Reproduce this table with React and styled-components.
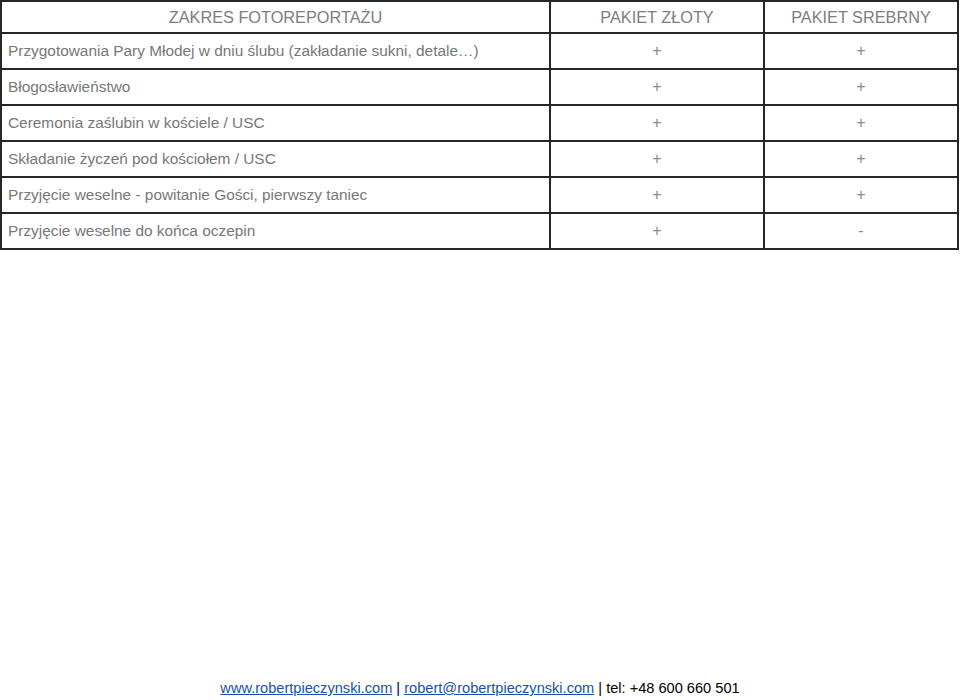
import React from "react";
import styled, { createGlobalStyle } from "styled-components";

const rows = [
  ["Przygotowania Pary Młodej w dniu ślubu (zakładanie sukni, detale…)", "+", "+"],
  ["Błogosławieństwo", "+", "+"],
  ["Ceremonia zaślubin w kościele / USC", "+", "+"],
  ["Składanie życzeń pod kościołem / USC", "+", "+"],
  ["Przyjęcie weselne - powitanie Gości, pierwszy taniec", "+", "+"],
  ["Przyjęcie weselne do końca oczepin", "+", "-"],
];

const App = () => {
  return (
    <>
      <GlobalStyle />
      <Page>
        <Table>
          <colgroup>
            <col style={{ width: 549 }} />
            <col style={{ width: 214 }} />
            <col style={{ width: 194 }} />
          </colgroup>
          <thead>
            <tr>
              <Head>ZAKRES FOTOREPORTAŻU</Head>
              <Head>PAKIET ZŁOTY</Head>
              <Head>PAKIET SREBRNY</Head>
            </tr>
          </thead>
          <tbody>
            {rows.map(([label, gold, silver]) => (
              <tr key={label}>
                <Label>{label}</Label>
                <Mark>{gold}</Mark>
                <Mark>{silver}</Mark>
              </tr>
            ))}
          </tbody>
        </Table>

        <Footer>
          <a href="#">www.robertpieczynski.com</a> |{" "}
          <a href="#">robert@robertpieczynski.com</a> | tel: +48 600 660 501
        </Footer>
      </Page>
    </>
  );
};

export default App;

/* ================= STYLES ================= */

const GlobalStyle = createGlobalStyle`
  body {
    margin: 0;
    background: #fff;
    font-family: "Liberation Sans", Arial, sans-serif;
  }
`;

const Page = styled.div`
  min-height: 700px;
  display: flex;
  flex-direction: column;
`;

const Table = styled.table`
  border-collapse: collapse;
  table-layout: fixed;
  width: 959px;
  font-size: 15.4px;
  color: #777;

  td,
  th {
    border: 2px solid #262626;
    padding: 0;
  }
`;

const Head = styled.th`
  height: 30px;
  font-size: 16.3px;
  font-weight: normal;
  color: #7e7e7e;
  text-align: center;
  vertical-align: middle;
`;

const Label = styled.td`
  height: 34px;
  padding-left: 6px !important;
  text-align: left;
  vertical-align: middle;
`;

const Mark = styled.td`
  height: 34px;
  font-size: 16px;
  text-align: center;
  vertical-align: middle;
  color: #8a8a8a;
`;

const Footer = styled.div`
  margin-top: auto;
  padding-bottom: 2px;
  text-align: center;
  font-size: 14.6px;
  color: #000;
  line-height: 20px;

  a {
    color: #1a4fae;
    text-decoration: underline;
  }
`;
